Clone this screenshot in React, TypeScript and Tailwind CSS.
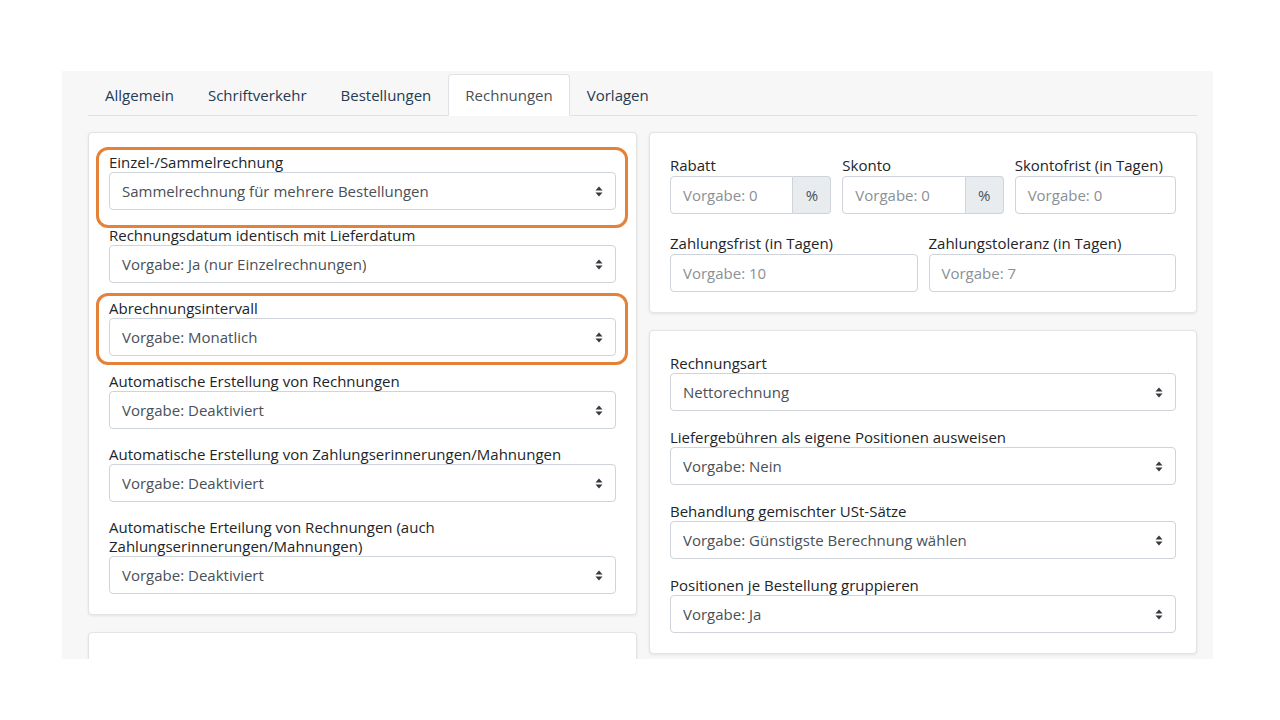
import React from "react";

const tabs = ["Allgemein", "Schriftverkehr", "Bestellungen", "Rechnungen", "Vorlagen"];

function Caret() {
  return (
    <svg width="8" height="11" viewBox="0 0 8 11" className="shrink-0">
      <path d="M4 0.5 L7.5 4.5 L0.5 4.5 Z" fill="#343a40" />
      <path d="M4 10.5 L7.5 6.5 L0.5 6.5 Z" fill="#343a40" />
    </svg>
  );
}

function Select({ value }: { value: string }) {
  return (
    <div className="flex items-center justify-between h-[38px] border border-[#ced4da] rounded-[4px] bg-white pl-[12px] pr-[12px] text-[#495057]">
      <span className="truncate">{value}</span>
      <Caret />
    </div>
  );
}

function Input({ placeholder, addon }: { placeholder: string; addon?: string }) {
  return (
    <div className="flex h-[38px]">
      <div
        className={
          "flex-1 flex items-center border border-[#ced4da] bg-white pl-[12px] text-[#8a9096] " +
          (addon ? "rounded-l-[4px]" : "rounded-[4px]")
        }
      >
        {placeholder}
      </div>
      {addon && (
        <div className="w-[38px] flex items-center justify-center bg-[#e9ecef] border border-l-0 border-[#ced4da] rounded-r-[4px] text-[#495057]">
          {addon}
        </div>
      )}
    </div>
  );
}

function Field({
  label,
  value,
  tight,
}: {
  label: string;
  value: string;
  tight?: boolean;
}) {
  return (
    <div>
      <div className={"text-[#212529] " + (tight ? "leading-[19px]" : "leading-[20px]")}>{label}</div>
      <Select value={value} />
    </div>
  );
}

function Highlight({ bottom }: { bottom: string }) {
  return (
    <div
      className={
        "absolute -top-[6px] -left-[13px] -right-[12px] border-[3px] border-[#e5823a] rounded-[12px] pointer-events-none " +
        bottom
      }
    />
  );
}

export default function App() {
  return (
    <div
      className="bg-white min-h-[720px] pt-[71px] pl-[62px] text-[15px]"
      style={{ fontFamily: '"Open Sans", "Noto Sans", sans-serif' }}
    >
      <div className="w-[1151px] h-[588px] bg-[#f7f7f7] overflow-hidden pt-[3px] pl-[26px] pr-[16px]">
        {/* Tabs */}
        <div className="flex border-b border-[#dee2e6] h-[42px]">
          {tabs.map((t) => (
            <div
              key={t}
              className={
                "px-[16px] flex items-center border rounded-t-[4px] -mb-px " +
                (t === "Rechnungen"
                  ? "bg-white border-[#dee2e6] border-b-white text-[#495057]"
                  : "border-transparent text-[#243b53]")
              }
            >
              {t}
            </div>
          ))}
        </div>

        <div className="flex gap-[12px] mt-[16px]">
          {/* Left column */}
          <div className="w-[549px] flex flex-col gap-[17px]">
            <div className="bg-white border border-[#e3e3e3] rounded-[4px] shadow-[0_1px_3px_rgba(0,0,0,0.08)] pt-[20px] pb-[20px] px-[20px] flex flex-col gap-[16px]">
              <div className="relative">
                <Highlight bottom="-bottom-[18px]" />
                <Field tight label="Einzel-/Sammelrechnung" value="Sammelrechnung für mehrere Bestellungen" />
              </div>
              <Field tight label="Rechnungsdatum identisch mit Lieferdatum" value="Vorgabe: Ja (nur Einzelrechnungen)" />
              <div className="relative">
                <Highlight bottom="-bottom-[9px]" />
                <Field tight label="Abrechnungsintervall" value="Vorgabe: Monatlich" />
              </div>
              <Field tight label="Automatische Erstellung von Rechnungen" value="Vorgabe: Deaktiviert" />
              <Field
                tight
                label="Automatische Erstellung von Zahlungserinnerungen/Mahnungen"
                value="Vorgabe: Deaktiviert"
              />
              <Field
                tight
                label="Automatische Erteilung von Rechnungen (auch Zahlungserinnerungen/Mahnungen)"
                value="Vorgabe: Deaktiviert"
              />
            </div>
            <div className="bg-white border border-[#e3e3e3] rounded-[4px] shadow-[0_1px_3px_rgba(0,0,0,0.08)] h-[120px]" />
          </div>

          {/* Right column */}
          <div className="w-[548px] flex flex-col gap-[17px]">
            <div className="bg-white border border-[#e3e3e3] rounded-[4px] shadow-[0_1px_3px_rgba(0,0,0,0.08)] pt-[22px] pb-[20px] px-[20px]">
              <div className="grid grid-cols-3 gap-x-[11px]">
                <div>
                  <div className="leading-[20px] text-[#212529] mb-[1px]">Rabatt</div>
                  <Input placeholder="Vorgabe: 0" addon="%" />
                </div>
                <div>
                  <div className="leading-[20px] text-[#212529] mb-[1px]">Skonto</div>
                  <Input placeholder="Vorgabe: 0" addon="%" />
                </div>
                <div>
                  <div className="leading-[20px] text-[#212529] mb-[1px]">Skontofrist (in Tagen)</div>
                  <Input placeholder="Vorgabe: 0" />
                </div>
              </div>
              <div className="grid grid-cols-2 gap-x-[11px] mt-[19px]">
                <div>
                  <div className="leading-[20px] text-[#212529] mb-[1px]">Zahlungsfrist (in Tagen)</div>
                  <Input placeholder="Vorgabe: 10" />
                </div>
                <div>
                  <div className="leading-[20px] text-[#212529] mb-[1px]">Zahlungstoleranz (in Tagen)</div>
                  <Input placeholder="Vorgabe: 7" />
                </div>
              </div>
            </div>
            <div className="bg-white border border-[#e3e3e3] rounded-[4px] shadow-[0_1px_3px_rgba(0,0,0,0.08)] pt-[22px] pb-[20px] px-[20px] flex flex-col gap-[16px]">
              <Field label="Rechnungsart" value="Nettorechnung" />
              <Field label="Liefergebühren als eigene Positionen ausweisen" value="Vorgabe: Nein" />
              <Field label="Behandlung gemischter USt-Sätze" value="Vorgabe: Günstigste Berechnung wählen" />
              <Field label="Positionen je Bestellung gruppieren" value="Vorgabe: Ja" />
            </div>
          </div>
        </div>
      </div>
    </div>
  );
}
